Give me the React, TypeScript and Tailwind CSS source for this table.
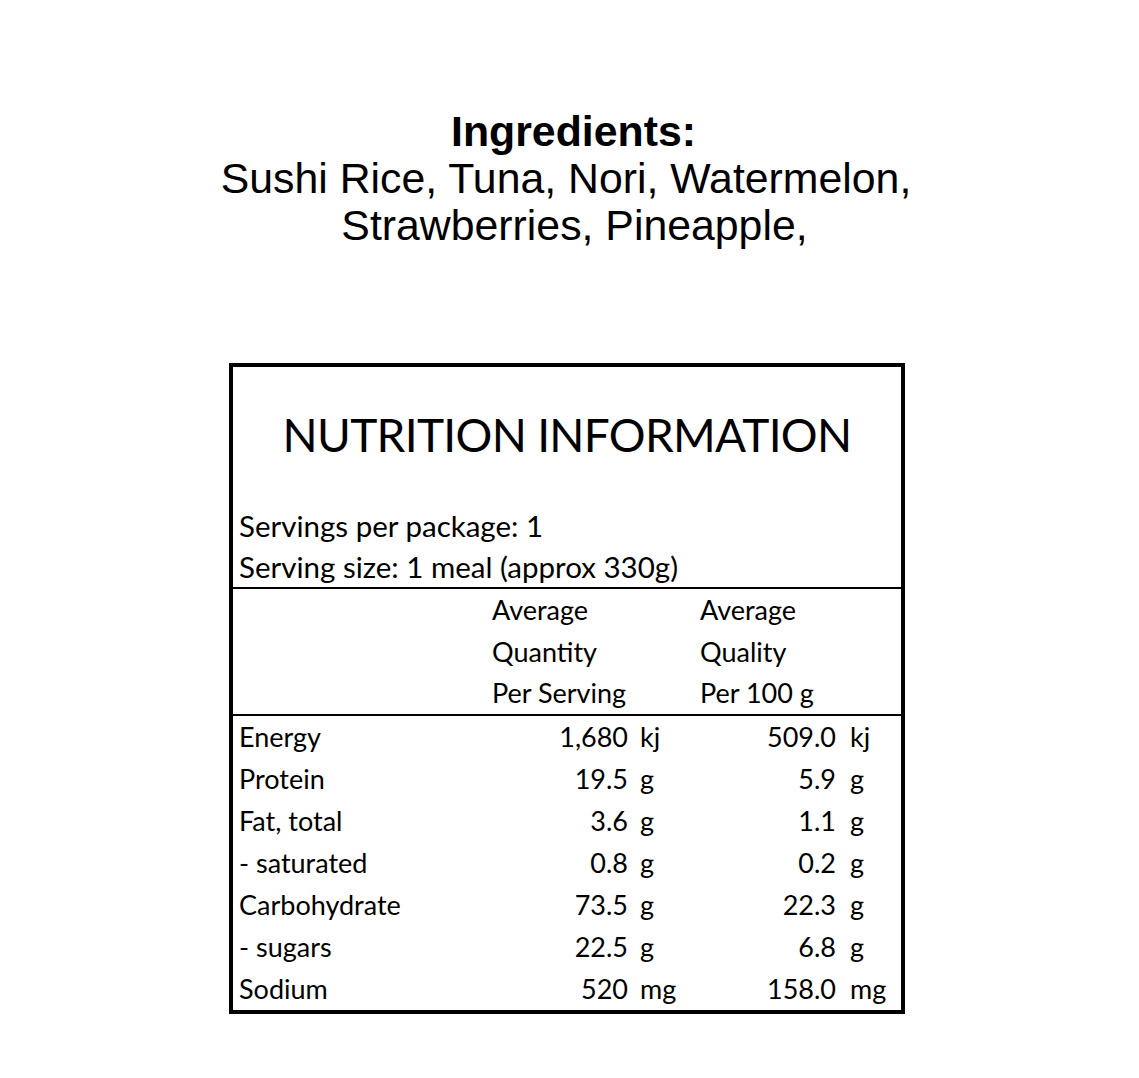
import React from "react";

const rows: [string, string, string, string, string][] = [
  ["Energy", "1,680", "kj", "509.0", "kj"],
  ["Protein", "19.5", "g", "5.9", "g"],
  ["Fat, total", "3.6", "g", "1.1", "g"],
  ["- saturated", "0.8", "g", "0.2", "g"],
  ["Carbohydrate", "73.5", "g", "22.3", "g"],
  ["- sugars", "22.5", "g", "6.8", "g"],
  ["Sodium", "520", "mg", "158.0", "mg"],
];

export default function App() {
  return (
    <div className="w-[1139px] min-h-[1078px] bg-white text-black">
      <div
        className="pt-[108px] text-center text-[42.8px] leading-[47px] text-black"
        style={{ fontFamily: '"Liberation Sans", Arial, sans-serif' }}
      >
        <div className="font-bold pl-[8px]">Ingredients:</div>
        <div className="pr-[7px]">Sushi Rice, Tuna, Nori, Watermelon,</div>
        <div className="pl-[10px]">Strawberries, Pineapple,</div>
      </div>

      <div
        className="ml-[229px] mt-[114px] w-[676px] border-4 border-black text-[27px] leading-[41px] text-black"
        style={{ fontFamily: 'Lato, "Open Sans", sans-serif' }}
      >
        <div className="pt-[38px] text-center text-[46px] leading-[60px] tracking-[-0.7px]">
          NUTRITION INFORMATION
        </div>
        <div className="mt-[40px] pl-[6px] text-[29.5px]">
          <div>Servings per package: 1</div>
          <div>Serving size: 1 meal (approx 330g)</div>
        </div>
        <div className="h-[2px] bg-black" />
        <div className="grid grid-cols-[253px_208px_1fr] pl-[6px] leading-[41.5px]">
          <div />
          <div>
            <div>Average</div>
            <div>Quantity</div>
            <div>Per Serving</div>
          </div>
          <div>
            <div>Average</div>
            <div>Quality</div>
            <div>Per 100 g</div>
          </div>
        </div>
        <div className="h-[2px] bg-black" />
        <div className="pl-[6px] leading-[42px]">
          {rows.map((r) => (
            <div key={r[0]} className="grid grid-cols-[253px_136px_72px_136px_1fr]">
              <div>{r[0]}</div>
              <div className="text-right">{r[1]}</div>
              <div className="pl-[12px]">{r[2]}</div>
              <div className="text-right">{r[3]}</div>
              <div className="pl-[14px]">{r[4]}</div>
            </div>
          ))}
        </div>
      </div>
    </div>
  );
}
